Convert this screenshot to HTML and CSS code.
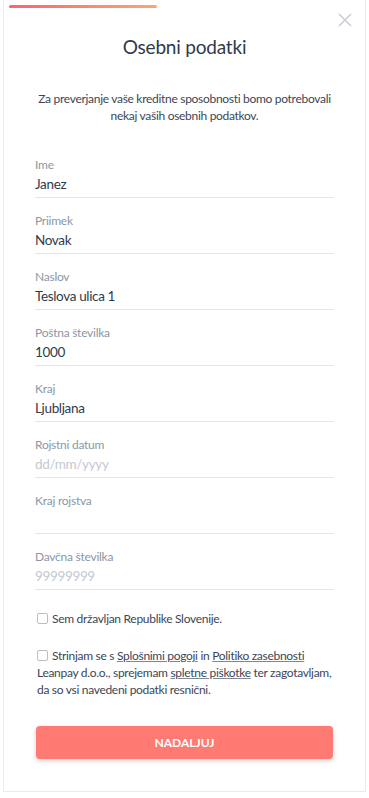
FILE: index.html
```html
<!DOCTYPE html>
<html lang="sl">
<head>
<meta charset="utf-8">
<link rel="stylesheet" href="styles.css">
</head>
<body>
<div class="card">
  <div class="top">
    <div class="progress"></div>
    <button class="close" aria-label="Zapri">
      <svg width="14" height="14" viewBox="0 0 14 14"><path d="M1 1L13 13M13 1L1 13" stroke="#c9ced6" stroke-width="1.6" fill="none"/></svg>
    </button>
  </div>
  <h1 class="title">Osebni podatki</h1>
  <p class="intro">Za preverjanje vaše kreditne sposobnosti bomo potrebovali nekaj vaših osebnih podatkov.</p>
  <form class="form">
    <div class="field"><label>Ime</label><div class="value">Janez</div></div>
    <div class="field"><label>Priimek</label><div class="value">Novak</div></div>
    <div class="field"><label>Naslov</label><div class="value">Teslova ulica 1</div></div>
    <div class="field"><label>Poštna številka</label><div class="value">1000</div></div>
    <div class="field"><label>Kraj</label><div class="value">Ljubljana</div></div>
    <div class="field"><label>Rojstni datum</label><div class="value placeholder">dd/mm/yyyy</div></div>
    <div class="field"><label>Kraj rojstva</label><div class="value"></div></div>
    <div class="field"><label>Davčna številka</label><div class="value placeholder">99999999</div></div>
    <div class="check check-first"><span class="box"></span><span>Sem državljan Republike Slovenije.</span></div>
    <div class="check check-second"><span class="box"></span>Strinjam se s <a href="#">Splošnimi pogoji</a> in <a href="#">Politiko zasebnosti</a> Leanpay d.o.o., sprejemam <a href="#">spletne piškotke</a> ter zagotavljam, da so vsi navedeni podatki resnični.</div>
    <button type="button" class="submit">NADALJUJ</button>
  </form>
</div>
</body>
</html>
```
FILE: styles.css
```css
* { box-sizing: border-box; }
html, body { margin: 0; padding: 0; background: #fff; }
body { font-family: Lato, "Open Sans", sans-serif; color: #2f3a4b; }
.card {
  margin: 0 3px;
  width: 363px;
  height: 792px;
  border: 1px solid #e6eeec;
  border-top: none;
  padding: 0 31px;
  background: #fff;
}
.top { position: relative; height: 30px; }
.progress {
  position: absolute; left: -26px; top: 5px;
  width: 148px; height: 3px; border-radius: 2px;
  background: linear-gradient(90deg, #fb6470, #ffa472);
}
.close {
  position: absolute; right: -18px; top: 13px;
  background: none; border: 0; padding: 0; width: 14px; height: 14px; display: block;
}
.title { margin: 5px 0 0; text-align: center; font-size: 19px; letter-spacing: -0.2px; font-weight: 400; line-height: 24px; color: #2f3a4b; }
.intro { margin: 31px 0 0; text-align: center; font-size: 12px; letter-spacing: -0.3px; line-height: 17px; color: #3c4656; }
.form { margin-top: 18px; display: flex; flex-direction: column; }
.field { height: 56px; border-bottom: 1px solid #e3e6eb; display: flex; flex-direction: column; justify-content: flex-end; padding-bottom: 3px; }
.field label { font-size: 12px; letter-spacing: -0.25px; line-height: 16px; color: #8b97a8; }
.value { font-size: 13.5px; letter-spacing: -0.35px; line-height: 20px; height: 20px; color: #2f3a4b; margin-top: 1px; }
.value.placeholder { color: #c3c9d2; }
.check { font-size: 12px; letter-spacing: -0.3px; line-height: 17px; color: #3c4656; padding-left: 2px; }
.check-first { margin-top: 20px; display: flex; align-items: center; }
.check-second { margin-top: 20px; }
.box { display: inline-block; width: 11px; height: 11px; border: 1px solid #b9bfc8; border-radius: 2px; margin-right: 4px; vertical-align: -1px; }
.check a { color: #3c4656; text-decoration: underline; text-decoration-color: #7d8796; }
.submit {
  margin-top: 28px; height: 33px; width: 297px; margin-left: 1px;
  background: #ff7a72; border: 0; border-radius: 4px; color: #fff;
  font-family: inherit; font-weight: 700; font-size: 12px; letter-spacing: 0;
  box-shadow: 0 2px 5px rgba(0,0,0,0.18);
}
```
